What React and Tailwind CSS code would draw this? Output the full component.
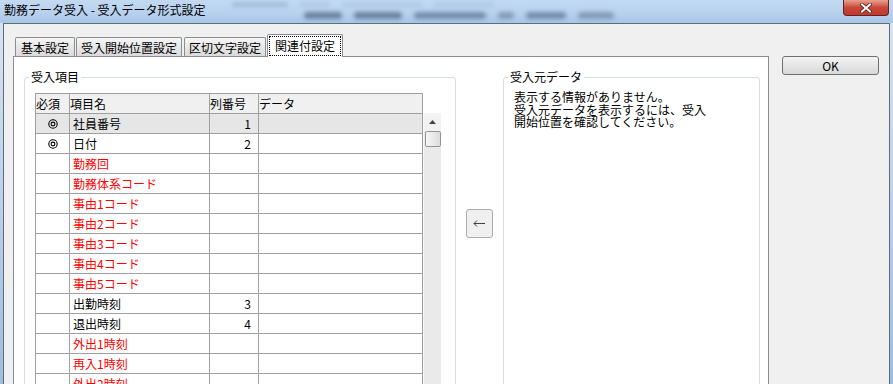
const rows = [
  { req: true, name: '社員番号', col: '1', sel: true },
  { req: true, name: '日付', col: '2' },
  { name: '勤務回', red: true },
  { name: '勤務体系コード', red: true },
  { name: '事由1コード', red: true },
  { name: '事由2コード', red: true },
  { name: '事由3コード', red: true },
  { name: '事由4コード', red: true },
  { name: '事由5コード', red: true },
  { name: '出勤時刻', col: '3' },
  { name: '退出時刻', col: '4' },
  { name: '外出1時刻', red: true },
  { name: '再入1時刻', red: true },
  { name: '外出2時刻', red: true },
  { name: '再入2時刻', red: true },
];

const tabs = [
  { label: '基本設定', w: 'w-[60px] ml-[2px]' },
  { label: '受入開始位置設定', w: 'w-[106px] ml-[1px]' },
  { label: '区切文字設定', w: 'w-[82px] ml-[2px]' },
];

// double circle mark for required items
const Required = () => (
  <svg width="10" height="10" viewBox="0 0 10 10">
    <circle cx="5" cy="5" r="4.2" stroke="#000" strokeWidth="1.1" fill="none" />
    <circle cx="5" cy="5" r="1.9" stroke="#000" strokeWidth="1.1" fill="none" />
  </svg>
);

const TitleBar = () => (
  <div className="h-[23px] shrink-0 flex items-start bg-gradient-to-b from-[#c3d9f1] via-[#b9d2ee] to-[#aac6e6]">
    <span className="pl-[4px] pt-[3px] leading-[14px] text-[12px] text-black whitespace-nowrap">
      勤務データ受入 - 受入データ形式設定
    </span>
    <div className="flex-1 flex flex-col gap-[5px] pl-[26px] pt-[2px] blur-[2px]">
      <div className="flex gap-[12px] opacity-40">
        <div className="w-[56px] h-[5px] rounded bg-[#7f97b3]" />
        <div className="w-[30px] h-[5px] rounded bg-[#9fb6cf]" />
        <div className="w-[80px] h-[5px] rounded bg-[#9fb6cf]" />
        <div className="w-[60px] h-[5px] rounded bg-[#9fb6cf]" />
      </div>
      <div className="flex gap-[12px] pl-[72px] opacity-70">
        <div className="w-[38px] h-[7px] rounded bg-[#4d6380]" />
        <div className="w-[48px] h-[7px] rounded bg-[#4d6380]" />
        <div className="w-[72px] h-[7px] rounded bg-[#5b7290]" />
        <div className="w-[16px] h-[7px] rounded bg-[#6f86a2]" />
        <div className="w-[40px] h-[7px] rounded bg-[#5b7290]" />
        <div className="w-[36px] h-[7px] rounded bg-[#6f86a2]" />
      </div>
    </div>
    <div className="mr-[4px] w-[46px] h-[16px] rounded-b-[4px] border border-t-0 border-[#5e2620] bg-gradient-to-b from-[#e8a08f] via-[#c9473a] to-[#c23a2c] flex items-center justify-center">
      <svg width="12" height="10" viewBox="0 0 12 10">
        <path d="M2 1.5 L10 8.5 M10 1.5 L2 8.5" stroke="#4a1d18" strokeWidth="3.6" strokeLinecap="square" />
        <path d="M2 1.5 L10 8.5 M10 1.5 L2 8.5" stroke="#ffffff" strokeWidth="2" strokeLinecap="square" />
      </svg>
    </div>
  </div>
);

const GridTable = () => (
  <div className="flex items-start pl-[10px] pt-[9px]">
    <div className="w-[388px] border-l border-t border-[#a0a0a0]">
      <div className="grid grid-cols-[34px_140px_49px_164px] h-[20px] bg-[#f0f0f0]">
        <div className="border-r border-b border-[#a0a0a0] leading-[19px]">必須</div>
        <div className="border-r border-b border-[#a0a0a0] leading-[19px]">項目名</div>
        <div className="border-r border-b border-[#a0a0a0] leading-[19px]">列番号</div>
        <div className="border-r border-b border-[#a0a0a0] leading-[19px]">データ</div>
      </div>
      {rows.map((r) => (
        <div
          key={r.name}
          className={`grid grid-cols-[34px_140px_49px_164px] h-[20px] ${r.sel ? 'bg-[#e6e6e6]' : 'bg-white'}`}
        >
          <div className="border-r border-b border-[#a0a0a0] flex items-center justify-center">
            {r.req && <Required />}
          </div>
          <div
            className={`border-r border-b border-[#a0a0a0] leading-[19px] pl-[3px] ${r.red ? 'text-[#ff0000]' : 'text-black'}`}
          >
            {r.name}
          </div>
          <div className="border-r border-b border-[#a0a0a0] leading-[19px] text-right pr-[7px]">
            {r.col || ''}
          </div>
          <div className="border-r border-b border-[#a0a0a0]" />
        </div>
      ))}
    </div>
    <div className="w-[18px] h-[300px] mt-[20px] bg-[#eaeaea] border-l border-[#f8f8f8] flex flex-col items-center">
      <div className="h-[18px] w-full flex items-center justify-center bg-[#f2f2f2]">
        <svg width="7" height="4" viewBox="0 0 7 4">
          <path d="M0 4 L3.5 0 L7 4 Z" fill="#444" />
        </svg>
      </div>
      <div className="w-[16px] h-[16px] rounded-[2px] border border-[#959595] bg-gradient-to-r from-[#f7f7f7] to-[#dcdcdc]" />
    </div>
  </div>
);

export default function App() {
  return (
    <div className="w-[893px] h-[384px] overflow-hidden flex flex-col bg-[#b9d0ea] text-[12px] text-black font-['Noto_Sans_CJK_JP','Noto_Sans',sans-serif]">
      <TitleBar />
      <div className="flex flex-1 min-h-0">
        <div className="w-[3px] bg-gradient-to-b from-[#d7e3f0] to-[#9fbde0]" />
        <div className="flex-1 border-l border-t border-r border-[#5d6d7e] bg-[#f0f0f0] flex items-start pl-[9px] pt-[10px]">
          <div className="w-[756px] flex flex-col">
            <div className="relative z-10 flex items-end h-[22px]">
              {tabs.map((t) => (
                <div
                  key={t.label}
                  className={`${t.w} h-[19px] border border-b-0 border-[#8c8e94] rounded-t-[2px] bg-gradient-to-b from-[#f6f6f6] to-[#dadada] flex items-center justify-center pt-[2px] leading-[14px] whitespace-nowrap`}
                >
                  {t.label}
                </div>
              ))}
              <div className="w-[76px] ml-[1px] h-[23px] -mb-[1px] border border-b-0 border-[#898c95] rounded-t-[2px] bg-white p-[1px]">
                <div className="h-[20px] border border-dotted border-black flex items-center justify-center leading-[14px] whitespace-nowrap">
                  関連付設定
                </div>
              </div>
            </div>
            <div className="h-[340px] border border-[#898c95] bg-white flex items-start pl-[10px] pr-[8px] pt-[13px]">
              <fieldset className="w-[432px] h-[330px] border border-[#d5dfe5] rounded-[3px]">
                <legend className="ml-[4px] px-[2px] leading-[14px]">受入項目</legend>
                <GridTable />
              </fieldset>
              <div className="w-[47px] flex justify-center">
                <button className="mt-[139px] w-[27px] h-[29px] rounded-[3px] border border-[#acacac] bg-[#f0f0f0] flex items-center justify-center">
                  <svg width="13" height="7" viewBox="0 0 13 7">
                    <path d="M1 3.5 H12 M4 0.5 L1 3.5 L4 6.5" stroke="#404040" strokeWidth="1" fill="none" />
                  </svg>
                </button>
              </div>
              <fieldset className="w-[257px] h-[330px] border border-[#d5dfe5] rounded-[3px]">
                <legend className="ml-[4px] px-[2px] leading-[14px]">受入元データ</legend>
                <div className="pl-[10px] pt-[7px] leading-[12.5px] text-[12px]">
                  <div>表示する情報がありません。</div>
                  <div>受入元データを表示するには、受入</div>
                  <div>開始位置を確認してください。</div>
                </div>
              </fieldset>
            </div>
          </div>
          <button className="ml-[13px] mt-[22px] w-[97px] h-[19px] rounded-[3px] border border-[#707070] bg-gradient-to-b from-[#f4f4f4] to-[#d8d8d8] leading-[14px]">
            OK
          </button>
        </div>
        <div className="w-[3px] bg-gradient-to-b from-[#d7e3f0] to-[#9fbde0]" />
      </div>
    </div>
  );
}
